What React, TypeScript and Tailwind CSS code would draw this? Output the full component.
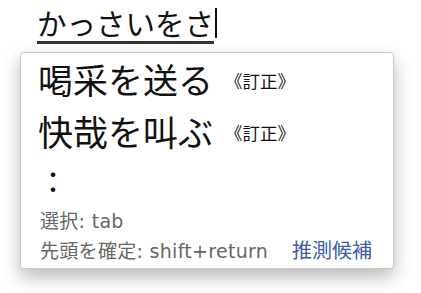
import React from 'react';

const candidates = [
  { word: "喝采を送る", note: "《訂正》" },
  { word: "快哉を叫ぶ", note: "《訂正》" },
];

const App: React.FC = () => {
  return (
    <div className="w-[421px] h-[293px] bg-white overflow-hidden text-[#111] font-['Noto_Sans_CJK_JP','Noto_Sans',sans-serif]">
      {/* composing text */}
      <div className="pl-[37px] pt-[4px] flex items-start h-[52px]">
        <span className="text-[29.5px] leading-[36px] border-b-[3px] border-[#333] pb-[1px]">かっさいをさ</span>
        <span className="w-[2px] h-[30px] bg-[#111] mt-[4px] ml-[1px]"></span>
      </div>

      {/* candidate window */}
      <div className="ml-[20px] w-[374px] h-[217px] bg-white border border-[#c8c8c8] rounded-[4px] shadow-[0_8px_18px_rgba(0,0,0,0.28)] pl-[17px] pr-[20px] flex flex-col">
        {candidates.map((c, i) => (
          <div key={i} className="flex items-center h-[52px]">
            <span className="text-[35px] leading-[48px]">{c.word}</span>
            <span className="text-[17.5px] leading-[24px] ml-[12px] mt-[4px]">{c.note}</span>
          </div>
        ))}
        <div className="h-[51px] flex items-center text-[30px] leading-[40px] pb-[6px]">：</div>
        <div className="h-[26px] flex items-center text-[19px] leading-[26px] text-[#666] font-['DejaVu_Sans','Noto_Sans_CJK_JP',sans-serif] tracking-[0.3px] pl-[2px]">
          選択: tab
        </div>
        <div className="h-[34px] flex items-center justify-between text-[19px] leading-[30px] font-['DejaVu_Sans','Noto_Sans_CJK_JP',sans-serif] pl-[2px]">
          <span className="text-[#666] tracking-[0.3px]">先頭を確定: shift+return</span>
          <span className="text-[#3c5aa6] text-[20px] mr-[1px]">推測候補</span>
        </div>
      </div>
    </div>
  );
};

export default App;
